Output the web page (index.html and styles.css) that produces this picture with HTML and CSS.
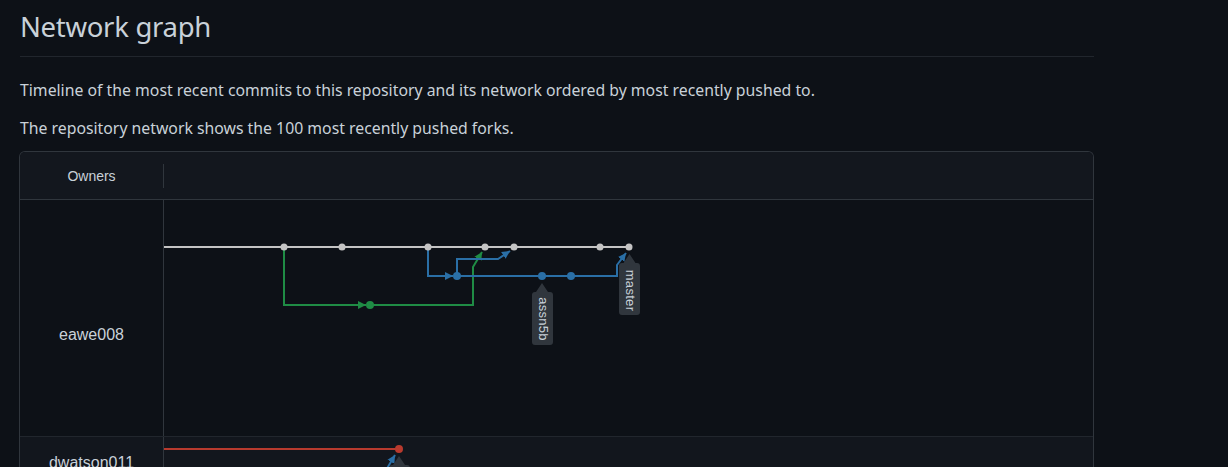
FILE: index.html
```html
<!DOCTYPE html>
<html lang="en">
<head>
<meta charset="utf-8">
<title>Network graph</title>
<link rel="stylesheet" href="styles.css">
</head>
<body>
<div class="page">
  <h1 class="subhead">Network graph</h1>
  <p class="lead">Timeline of the most recent commits to this repository and its network ordered by most recently pushed to.</p>
  <p class="lead">The repository network shows the 100 most recently pushed forks.</p>
  <div class="network">
    <div class="net-head">
      <div class="owners-h">Owners</div>
      <div class="graph-h"></div>
    </div>
    <div class="net-row">
      <div class="owner owner-first">eawe008</div>
      <div class="graph">
        <svg class="graph-svg" width="929" height="236" viewBox="0 0 929 236">
          <defs>
            <marker id="ah-green" markerUnits="userSpaceOnUse" markerWidth="9" markerHeight="9" refX="8" refY="4.5" orient="auto">
              <path d="M0 0.5 L8 4.5 L0 8.5 z" fill="#1f8c45"/>
            </marker>
            <marker id="ah-blue" markerUnits="userSpaceOnUse" markerWidth="9" markerHeight="9" refX="8" refY="4.5" orient="auto">
              <path d="M0 0.5 L8 4.5 L0 8.5 z" fill="#2a6fa6"/>
            </marker>
          </defs>
          <path d="M0 47 H465" stroke="#c4c4c4" stroke-width="2" fill="none"/>
          <path d="M120 47 V105 H202" stroke="#1f8c45" stroke-width="2" fill="none" marker-end="url(#ah-green)"/>
          <path d="M206 105 H309 V67 L318 52" stroke="#1f8c45" stroke-width="2" fill="none" marker-end="url(#ah-green)"/>
          <path d="M264 47 V76 H289" stroke="#2a6fa6" stroke-width="2" fill="none" marker-end="url(#ah-blue)"/>
          <path d="M293 76 V59 H334 L346 51" stroke="#2a6fa6" stroke-width="2" fill="none" marker-end="url(#ah-blue)"/>
          <path d="M293 76 H453 V65 L462 53" stroke="#2a6fa6" stroke-width="2" fill="none" marker-end="url(#ah-blue)"/>
          <g fill="#c4c4c4">
            <circle cx="120" cy="47" r="3.5"/>
            <circle cx="178" cy="47" r="3.5"/>
            <circle cx="264" cy="47" r="3.5"/>
            <circle cx="321" cy="47" r="3.5"/>
            <circle cx="350" cy="47" r="3.5"/>
            <circle cx="436" cy="47" r="3.5"/>
            <circle cx="465" cy="47" r="3.5"/>
          </g>
          <circle cx="206" cy="105" r="4" fill="#1f8c45"/>
          <g fill="#2a6fa6">
            <circle cx="293" cy="76" r="4"/>
            <circle cx="378" cy="76" r="4"/>
            <circle cx="407" cy="76" r="4"/>
          </g>
          <g class="tag">
            <path d="M378 83 L384 92 H386 Q389 92 389 95 V142 Q389 145 386 145 H371 Q368 145 368 142 V95 Q368 92 371 92 H372 Z" fill="#30363d"/>
            <text x="379" y="119" transform="rotate(90 379 119)" text-anchor="middle" dominant-baseline="central" class="tag-text">assn5b</text>
          </g>
          <g class="tag">
            <path d="M465.5 54 L471.5 63 H473 Q476 63 476 66 V112 Q476 115 473 115 H458 Q455 115 455 112 V66 Q455 63 458 63 H459.5 Z" fill="#30363d"/>
            <text x="466" y="90.5" transform="rotate(90 466 90.5)" text-anchor="middle" dominant-baseline="central" class="tag-text">master</text>
          </g>
        </svg>
      </div>
    </div>
    <div class="net-row net-row-alt">
      <div class="owner owner-second">dwatson011</div>
      <div class="graph">
        <svg class="graph-svg" width="929" height="120" viewBox="0 0 929 120">
          <defs>
            <marker id="ah-blue2" markerUnits="userSpaceOnUse" markerWidth="9" markerHeight="9" refX="8" refY="4.5" orient="auto">
              <path d="M0 0.5 L8 4.5 L0 8.5 z" fill="#2a6fa6"/>
            </marker>
          </defs>
          <path d="M0 12 H235" stroke="#b83a2e" stroke-width="2" fill="none"/>
          <circle cx="235" cy="12" r="4" fill="#b83a2e"/>
          <path d="M218 40 L231 18" stroke="#2a6fa6" stroke-width="2" fill="none" marker-end="url(#ah-blue2)"/>
          <path d="M235 19 L241 28 H243 Q246 28 246 31 V80 Q246 83 243 83 H228 Q225 83 225 80 V31 Q225 28 228 28 H229 Z" fill="#30363d"/>
        </svg>
      </div>
    </div>
  </div>
</div>
</body>
</html>
```

FILE: styles.css
```css
* { box-sizing: border-box; }

html, body {
  margin: 0;
  padding: 0;
  background: #0d1117;
}

body {
  color: #c9d1d9;
  font-family: "Noto Sans", "Liberation Sans", sans-serif;
}

.page {
  width: 1094px;
  padding: 8px 0 0 20px;
}

.subhead {
  margin: 0;
  padding: 0 0 10px;
  font-size: 27.5px;
  letter-spacing: -0.3px;
  font-weight: 400;
  line-height: 38px;
  color: #c9d1d9;
  border-bottom: 1px solid #21262d;
}

.lead {
  margin: 0;
  font-size: 15.8px;
  line-height: 22px;
  color: #c9d1d9;
}

.subhead + .lead {
  margin-top: 22px;
}

.lead + .lead {
  margin-top: 16px;
}

.network {
  margin-top: 12px;
  margin-left: -1px;
  border: 1px solid #30363d;
  border-bottom: none;
  border-radius: 6px 6px 0 0;
  overflow: hidden;
  font-family: "Liberation Sans", Arial, sans-serif;
}

.net-head {
  display: flex;
  align-items: center;
  height: 48px;
  background: #13171e;
  border-bottom: 1px solid #30363d;
}

.owners-h {
  width: 143px;
  text-align: center;
  font-size: 14px;
  color: #c9d1d9;
}

.graph-h {
  width: 1px;
  height: 24px;
  background: #30363d;
}

.net-row {
  display: flex;
  height: 237px;
  border-bottom: 1px solid #21262d;
}

.net-row-alt {
  height: 120px;
  background: #12161d;
}

.owner {
  width: 144px;
  flex: none;
  text-align: center;
  font-size: 16px;
  line-height: 20px;
  color: #c9d1d9;
  border-right: 1px solid #30363d;
}

.owner-first { padding-top: 125px; }
.owner-second { padding-top: 16px; }

.graph {
  flex: 1;
  overflow: hidden;
}

.graph-svg {
  display: block;
}

.tag-text {
  font-family: "Liberation Sans", Arial, sans-serif;
  font-size: 13px;
  letter-spacing: 0.3px;
  fill: #c9d1d9;
}
```
